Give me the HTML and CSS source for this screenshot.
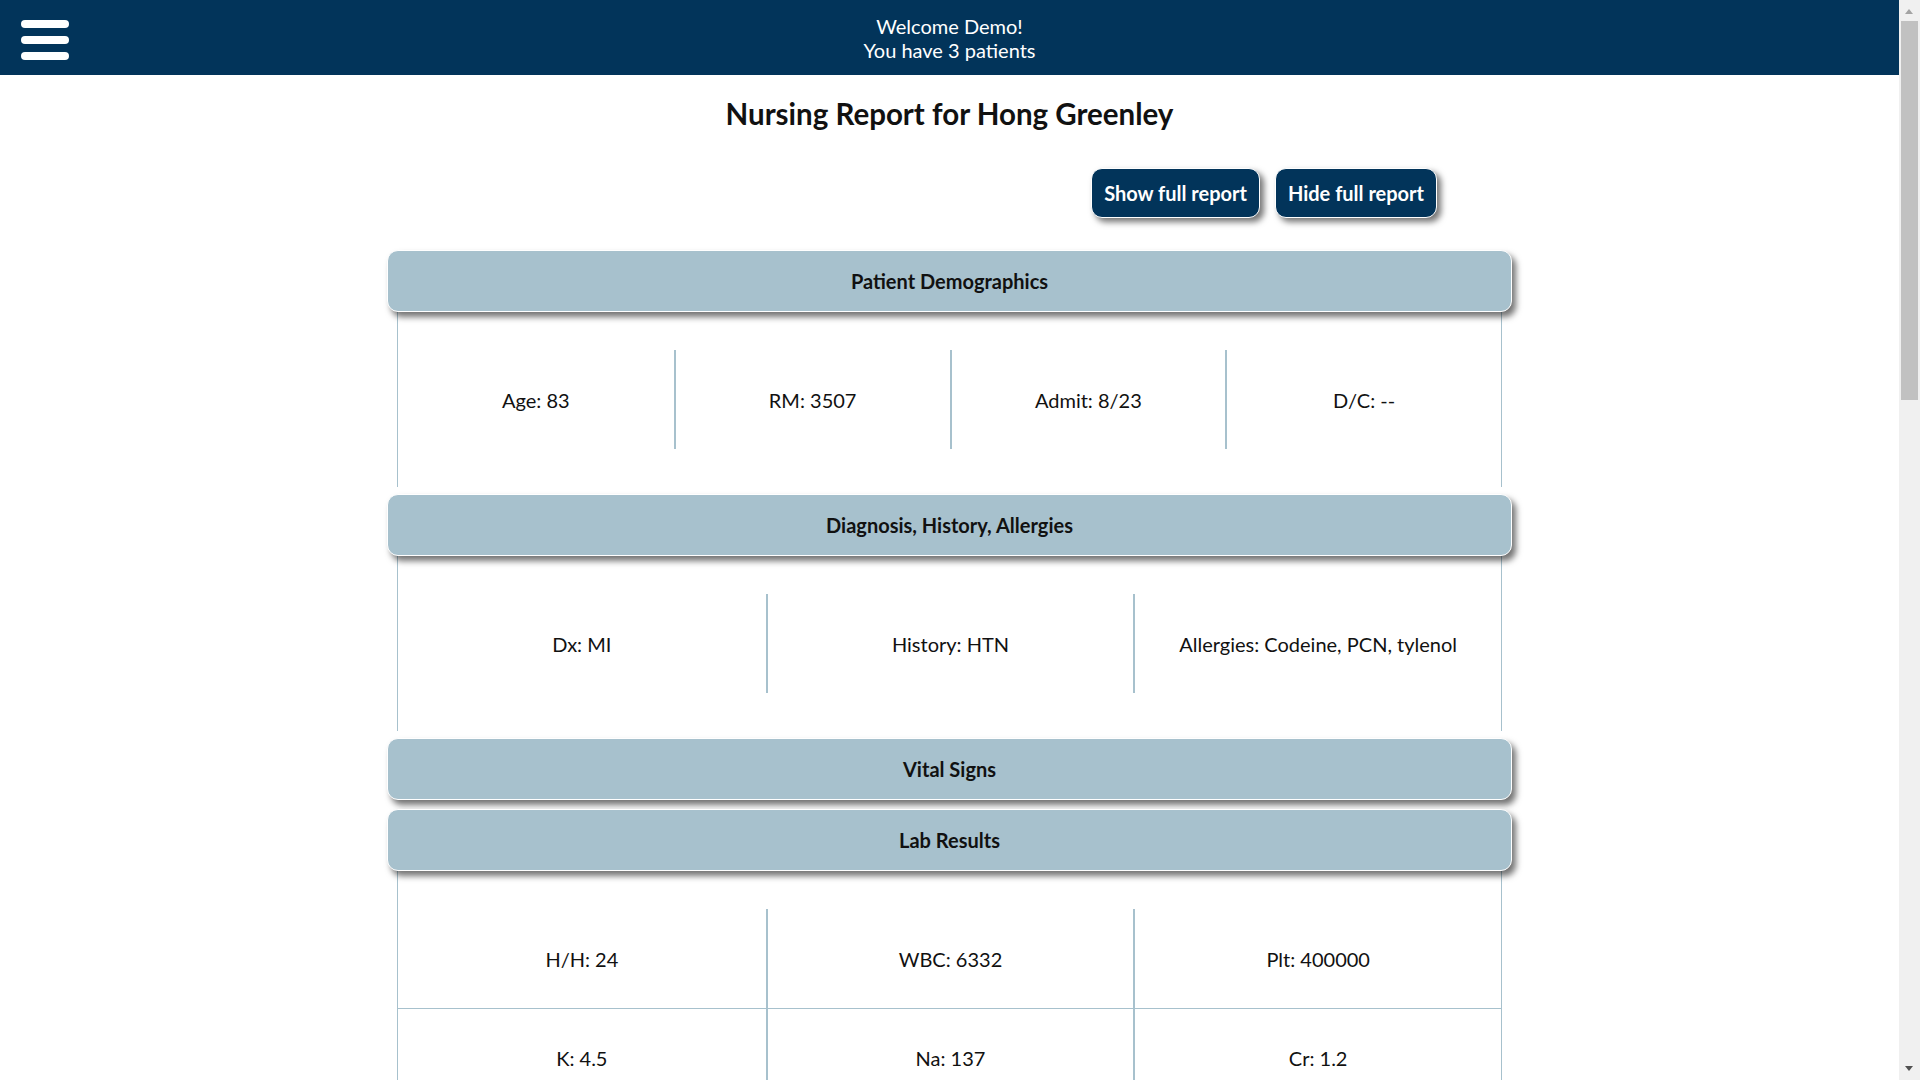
FILE: index.html
```html
<!DOCTYPE html>
<html lang="en">
<head>
<meta charset="utf-8">
<title>Nursing Report</title>
<link rel="stylesheet" href="styles.css">
</head>
<body>
<div class="page">
  <header class="topbar">
    <button class="menu" aria-label="Menu">
      <span class="bar"></span><span class="bar"></span><span class="bar"></span>
    </button>
    <div class="welcome">
      <div>Welcome Demo!</div>
      <div>You have 3 patients</div>
    </div>
  </header>
  <main class="report">
    <h1 class="title">Nursing Report for Hong Greenley</h1>
    <div class="actions">
      <button class="btn">Show full report</button>
      <button class="btn">Hide full report</button>
    </div>

    <section class="section">
      <div class="section-head">Patient Demographics</div>
      <div class="section-body">
        <div class="grid cols-4">
          <div class="cell">Age: 83</div>
          <div class="cell">RM: 3507</div>
          <div class="cell">Admit: 8/23</div>
          <div class="cell">D/C: --</div>
        </div>
      </div>
    </section>

    <section class="section">
      <div class="section-head">Diagnosis, History, Allergies</div>
      <div class="section-body">
        <div class="grid cols-3">
          <div class="cell">Dx: MI</div>
          <div class="cell">History: HTN</div>
          <div class="cell">Allergies: Codeine, PCN, tylenol</div>
        </div>
      </div>
    </section>

    <section class="section collapsed">
      <div class="section-head">Vital Signs</div>
    </section>

    <section class="section">
      <div class="section-head">Lab Results</div>
      <div class="section-body">
        <div class="grid cols-3 table">
          <div class="cell">H/H: 24</div>
          <div class="cell">WBC: 6332</div>
          <div class="cell">Plt: 400000</div>
          <div class="cell">K: 4.5</div>
          <div class="cell">Na: 137</div>
          <div class="cell">Cr: 1.2</div>
        </div>
      </div>
    </section>
  </main>
</div>
<div class="scrollbar" aria-hidden="true">
  <div class="arrow up"></div>
  <div class="thumb"></div>
  <div class="arrow down"></div>
</div>
</body>
</html>
```

FILE: styles.css
```css
* { box-sizing: border-box; }
html, body { margin: 0; padding: 0; }
body {
  font-family: Lato, "Open Sans", sans-serif;
  color: #111;
  background: #fff;
  overflow: hidden;
}
.page {
  margin-right: 21px;
}
.topbar {
  height: 75px;
  background: #02345a;
  color: #fff;
  display: flex;
  align-items: center;
  justify-content: center;
  position: relative;
}
.menu {
  position: absolute;
  left: 21px;
  top: 20px;
  width: 48px;
  padding: 0;
  border: 0;
  background: transparent;
  display: flex;
  flex-direction: column;
  gap: 8px;
  cursor: pointer;
}
.menu .bar {
  display: block;
  width: 48px;
  height: 8px;
  border-radius: 4px;
  background: #fff;
}
.welcome {
  text-align: center;
  font-size: 20px;
  line-height: 24px;
  padding-top: 1px;
}
.report {
  width: 1125px;
  margin: 0 auto;
  padding-bottom: 40px;
}
.title {
  margin: 21px 0 0;
  text-align: center;
  font-size: 29.5px;
  line-height: 35px;
  font-weight: 700;
  color: #111;
}
.actions {
  display: flex;
  justify-content: flex-end;
  gap: 15px;
  padding-right: 75px;
  margin-top: 37px;
  margin-bottom: 32px;
}
.btn {
  font-family: Lato, "Open Sans", sans-serif;
  font-size: 20px;
  line-height: 24px;
  font-weight: 700;
  color: #fff;
  background: #02345a;
  border: 1px solid #fff;
  border-radius: 11px;
  padding: 12px 12px;
  box-shadow: 4px 4px 6px rgba(0,0,0,0.55);
  cursor: pointer;
}
.section { margin-bottom: 7px; }
.section.collapsed { margin-bottom: 9px; }
.section-head {
  height: 62px;
  background: #a7c1cd;
  border: 1px solid #fff;
  border-radius: 11px;
  display: flex;
  align-items: center;
  justify-content: center;
  font-size: 20px;
  font-weight: 700;
  box-shadow: 4px 5px 6px rgba(0,0,0,0.55);
  position: relative;
  z-index: 1;
}
.section-body {
  margin: 0 10px;
  padding: 38px 0;
  border-left: 1px solid #a7c1cd;
  border-right: 1px solid #a7c1cd;
}
.grid { display: grid; }
.cols-4 { grid-template-columns: repeat(4, 1fr); }
.cols-3 { grid-template-columns: repeat(3, 1fr); }
.cell {
  height: 99px;
  display: flex;
  align-items: center;
  justify-content: center;
  font-size: 20px;
  text-align: center;
}
.cols-4 .cell + .cell,
.cols-3 .cell:not(:nth-child(3n+1)) { border-left: 2px solid #a7c1cd; }
.table .cell:nth-child(n+4) { border-top: 1px solid #a7c1cd; }

.scrollbar {
  position: fixed;
  top: 0;
  right: 0;
  width: 21px;
  height: 100vh;
  background: #f0f0f0;
  z-index: 10;
}
.scrollbar .thumb {
  position: absolute;
  left: 2px;
  right: 2px;
  top: 21px;
  height: 379px;
  background: #c1c1c1;
}
.scrollbar .arrow {
  position: absolute;
  left: 6px;
  width: 0;
  height: 0;
  border-left: 4.5px solid transparent;
  border-right: 4.5px solid transparent;
}
.scrollbar .up {
  top: 9px;
  border-bottom: 5px solid #a3a3a3;
}
.scrollbar .down {
  bottom: 9px;
  border-top: 5px solid #505050;
}
```
